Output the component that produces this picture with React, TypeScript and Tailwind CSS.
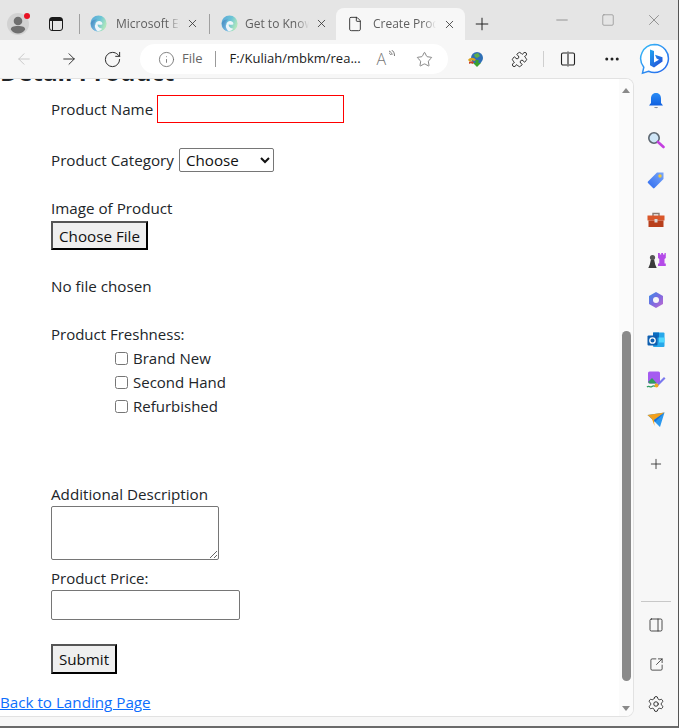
import { ArrowLeft, ArrowRight, Ellipsis, File, Info, Minus, PanelRight, Plus, Puzzle, RotateCw, Settings, Square, SquareArrowOutUpRight, Star, X } from "lucide-react";

const uiFont = "font-['Open_Sans','Noto_Sans',sans-serif]";

function EdgeLogo() {
  return (
    <svg width="17" height="17" viewBox="0 0 16 16" className="shrink-0">
      <defs>
        <linearGradient id="edgeA" x1="0" y1="0" x2="1" y2="0.4">
          <stop offset="0" stopColor="#5aa5d8" />
          <stop offset="0.6" stopColor="#6cc4d6" />
          <stop offset="1" stopColor="#aee6bc" />
        </linearGradient>
        <linearGradient id="edgeB" x1="0" y1="0" x2="1" y2="1">
          <stop offset="0" stopColor="#3f86bd" />
          <stop offset="1" stopColor="#8cc6ec" />
        </linearGradient>
      </defs>
      <circle cx="8" cy="8" r="7.6" fill="url(#edgeA)" />
      <path d="M5 9.2C5 6.6 7.2 5.4 9 5.6 11 5.800 12 7.400 11.600 8.600 10.600 9.600 8 9.200 7.400 8.600 6.800 10.400 8.600 12.600 11.600 12.600 10.400 14.600 8 15.600 5.600 15 3 13.600 4.200 10.400 5 9.200Z" fill="#eef5fa" />
      <path d="M1 7C2 4.600 5 3.600 7.200 4.400 5.400 5 3.600 7.400 4.600 11 4.900 12.600 6 14.200 7.400 15.400 3.400 15.200.6 11.600 1 7Z" fill="url(#edgeB)" />
    </svg>
  );
}

function TabFade({ text, width }: { text: string; width: string }) {
  return (
    <span
      className={`${width} overflow-hidden whitespace-nowrap text-[12px] leading-4 text-[#606060] [mask-image:linear-gradient(90deg,#000_80%,transparent)]`}
    >
      {text}
    </span>
  );
}

function Avatar() {
  return (
    <div className="relative mb-[5px] h-[22px] w-[22px] shrink-0">
      <svg width="22" height="22" viewBox="0 0 22 22">
        <circle cx="11" cy="11" r="11" fill="#d2d2d2" />
        <circle cx="11" cy="8" r="4.300" fill="#6f6f6f" />
        <path d="M3.800 16.500c0-2.500 2.500-3.500 7.200-3.500s7.200 1 7.200 3.500c-1.600 2.700-4.200 4-7.200 4s-5.600-1.300-7.200-4Z" fill="#6f6f6f" />
      </svg>
      <span className="absolute right-[-1px] top-0 h-[6px] w-[6px] rounded-full bg-[#e81123]" />
    </div>
  );
}

function TabBar() {
  return (
    <div className="flex h-[40px] items-end bg-[#e5e5e5] pl-[7px]">
      <Avatar />
      <div className="mb-[9px] ml-[20px] flex h-[14px] w-[14px] flex-col rounded-[3px] border-[1.5px] border-[#1a1a1a]">
        <div className="h-[3px] bg-[#1a1a1a]" />
        <div className="w-[3px] flex-1 border-r border-[#1a1a1a]" />
      </div>
      <div className="mb-[6px] ml-[16px] h-[20px] w-px bg-[#a0a0a0]" />
      <div className="mb-[8px] ml-[10px] flex w-[120px] items-center">
        <EdgeLogo />
        <span className="w-[9px]" />
        <TabFade text="Microsoft Edge" width="w-[64px]" />
        <X className="ml-[6px] h-[13px] w-[13px] text-[#333]" strokeWidth={1.5} />
      </div>
      <div className="mb-[6px] ml-[-1px] h-[20px] w-px bg-[#a0a0a0]" />
      <div className="mb-[8px] ml-[11px] flex w-[118px] items-center">
        <EdgeLogo />
        <span className="w-[7px]" />
        <TabFade text="Get to Know" width="w-[64px]" />
        <X className="ml-[6px] h-[13px] w-[13px] text-[#333]" strokeWidth={1.5} />
      </div>
      <div className="ml-[-3px] flex h-[32px] w-[129px] items-center rounded-t-[8px] bg-[#f7f7f7] pl-[11px]">
        <File className="h-[16px] w-[16px] text-[#222]" strokeWidth={1.3} />
        <span className="w-[10px]" />
        <TabFade text="Create Product" width="w-[63px]" />
        <X className="ml-[7px] h-[13px] w-[13px] text-[#333]" strokeWidth={1.5} />
      </div>
      <Plus className="mb-[6px] ml-[7px] h-[20px] w-[20px] text-[#222]" strokeWidth={1.2} />
      <div className="mb-[11px] ml-[61px] flex w-[110px] items-center justify-between">
        <Minus className="h-[18px] w-[18px] text-[#8a8a8a]" strokeWidth={1.2} />
        <Square className="h-[14px] w-[14px] text-[#8a8a8a]" strokeWidth={1.2} />
        <X className="h-[18px] w-[18px] text-[#8a8a8a]" strokeWidth={1.2} />
      </div>
    </div>
  );
}

function DownloadIcon() {
  return (
    <svg width="17" height="17" viewBox="0 0 17 17" className="shrink-0">
      <circle cx="10" cy="7" r="6" fill="#2f6fb5" />
      <path d="M7 3.400 11 2l2 3-3 2-2-1Z" fill="#5fae4a" />
      <path d="M1 9c2-3 6-3 8 0l-2 1c-1-1-3-1-4 1Z" fill="#d9a21c" />
      <path d="M2 11c2-1 4-1 5 .5l-1.500 1.500C4.500 12 3 12 2 13Z" fill="#c8402a" />
      <path d="M6 12h2.500V9h3v3H14l-4 4Z" fill="#3aa12e" />
    </svg>
  );
}

function BingLogo() {
  return (
    <svg width="31" height="32" viewBox="0 0 31 32" className="shrink-0">
      <defs>
        <linearGradient id="bingRing" x1="0" y1="0" x2="1" y2="1">
          <stop offset="0" stopColor="#38bdf8" />
          <stop offset="1" stopColor="#2563eb" />
        </linearGradient>
        <linearGradient id="bingB" x1="0" y1="0" x2="0.8" y2="1">
          <stop offset="0" stopColor="#22a7f0" />
          <stop offset="1" stopColor="#2450d8" />
        </linearGradient>
      </defs>
      <path d="M15.500 1.500a14 14 0 1 1-6 26.700L3.500 30.200l1.300-6A14 14 0 0 1 15.500 1.500Z" fill="#fff" stroke="url(#bingRing)" strokeWidth="1.500" />
      <path d="M11 6.500l4 1.500v11.500l5-2.800-2.400-1.200-1.600-3.800 7.500 2.600v4.200L15 24.500l-4-2.300Z" fill="url(#bingB)" />
    </svg>
  );
}

function ReadAloud() {
  return (
    <span className="relative flex h-[18px] w-[18px] items-center text-[16px] font-light leading-none text-[#777]">
      A
      <svg width="7" height="8" viewBox="0 0 7 8" className="absolute right-0 top-0" fill="none" stroke="#777" strokeWidth="1">
        <path d="M1 1c2 1 3 2 3 4M1 3c1 .5 1.500 1 1.500 2M3.500 0c2 1 3 3 3 6" />
      </svg>
    </span>
  );
}

function Toolbar() {
  return (
    <div className="flex h-[38px] items-center bg-[#f7f7f7] pl-[15px]">
      <ArrowLeft className="h-[18px] w-[18px] text-[#c4c4c4]" strokeWidth={1.2} />
      <ArrowRight className="ml-[27px] h-[18px] w-[18px] text-[#222]" strokeWidth={1.2} />
      <RotateCw className="ml-[25px] h-[19px] w-[19px] text-[#222]" strokeWidth={1.2} />
      <div className="ml-[18px] flex h-[30px] w-[308px] items-center rounded-full bg-white pl-[18px] text-[13px]">
        <Info className="h-[17px] w-[17px] text-[#6e6e6e]" strokeWidth={1.2} />
        <span className="ml-[7px] text-[#666]">File</span>
        <span className="ml-[12px] h-[16px] w-px bg-[#9a9a9a]" />
        <span className="ml-[14px] w-[134px] whitespace-nowrap text-[#1a1a1a]">F:/Kuliah/mbkm/rea...</span>
        <span className="ml-[13px]"><ReadAloud /></span>
        <Star className="ml-[21px] h-[17px] w-[17px] text-[#666]" strokeWidth={1.1} />
      </div>
      <span className="ml-[19px]"><DownloadIcon /></span>
      <Puzzle className="ml-[27px] h-[17px] w-[17px] text-[#222]" strokeWidth={1.3} />
      <span className="ml-[15px] h-[16px] w-px bg-[#cfcfcf]" />
      <svg width="16" height="16" viewBox="0 0 16 16" className="ml-[16px]" fill="none" stroke="#222" strokeWidth="1.100">
        <path d="M7 2H3a1.500 1.500 0 0 0-1.500 1.500v9A1.500 1.500 0 0 0 3 14h4M9 2h4a1.500 1.500 0 0 1 1.500 1.500v9A1.500 1.500 0 0 1 13 14H9M8 0.500v15" />
      </svg>
      <Ellipsis className="ml-[27px] h-[18px] w-[18px] text-[#222]" strokeWidth={2} />
      <span className="ml-[18px]"><BingLogo /></span>
    </div>
  );
}

const buttonClass = "border-2 border-t-[#555] border-l-[#555] border-r-black border-b-black bg-[#efefef] text-[#111]";
const fieldBorder = "rounded-[2px] border border-[#767676] bg-white";

function PageContent() {
  return (
    <div className={`min-w-0 flex-1 overflow-hidden text-[15.2px] leading-[24px] text-[#212529] ${uiFont}`}>
      <h2 className="mt-[-21px] h-[28px] text-[24.3px] font-bold leading-[28px] text-[#212529]">Detail Product</h2>
      <form className="pl-[51px]">
        <div className="mt-[9px] flex h-[28px] items-center gap-[4px]">
          <label>Product Name</label>
          <input type="text" className="h-[28px] w-[187px] border border-[#f00] bg-white" />
        </div>
        <div className="mt-[25px] flex h-[24px] items-center gap-[5px]">
          <label>Product Category</label>
          <select className={`h-[24px] w-[95px] pl-[2px] text-[#111] ${fieldBorder}`}>
            <option>Choose</option>
          </select>
        </div>
        <p className="mt-[24px]">Image of Product</p>
        <button type="button" className={`mt-px block h-[29px] w-[97px] ${buttonClass}`}>Choose File</button>
        <p className="mt-[24px]">No file chosen</p>
        <p className="mt-[24px] text-[15px]">Product Freshness:</p>
        <div className="pl-[64px] text-[15px]">
          {["Brand New", "Second Hand", "Refurbished"].map((item) => (
            <label key={item} className="flex h-[24px] items-center gap-[5px]">
              <input type="checkbox" className="h-[13px] w-[13px]" />
              {item}
            </label>
          ))}
        </div>
        <p className="mt-[64px]">Additional Description</p>
        <textarea className={`block h-[54px] w-[168px] ${fieldBorder}`} />
        <p className="mt-[6px] text-[15px]">Product Price:</p>
        <input type="text" className={`block h-[30px] w-[189px] ${fieldBorder}`} />
        <button type="submit" className={`mt-[24px] block h-[30px] w-[66px] ${buttonClass}`}>Submit</button>
      </form>
      <a href="#" className="mt-[16px] block text-[#0d6efd] underline">Back to Landing Page</a>
    </div>
  );
}

function Scrollbar() {
  return (
    <div className="flex w-[14px] shrink-0 flex-col items-center bg-[#fbfbfb] pt-[9px]">
      <span className="h-0 w-0 border-x-[4px] border-b-[5px] border-x-transparent border-b-[#8a8a8a]" />
      <div className="mt-[238px] h-[350px] w-[9px] rounded-full bg-[#8a8a8a]" />
      <span className="mt-[25px] h-0 w-0 border-x-[4px] border-t-[5px] border-x-transparent border-t-[#8a8a8a]" />
    </div>
  );
}

function SideIcon({ children }: { children: React.ReactNode }) {
  return <div className="flex h-[40px] items-center justify-center">{children}</div>;
}

function Sidebar() {
  return (
    <div className="flex flex-1 flex-col items-stretch pt-[2px]">
      <SideIcon>
        <svg width="18" height="18" viewBox="0 -1 18 18">
          <defs>
            <linearGradient id="bell" x1="0" y1="0" x2="0" y2="1">
              <stop offset="0" stopColor="#2a8cf5" />
              <stop offset="1" stopColor="#1160e0" />
            </linearGradient>
          </defs>
          <path d="M9 1c3.500 0 5 2.500 5 5.500V11l2 2.500H2L4 11V6.500C4 3.500 5.500 1 9 1Z" fill="url(#bell)" />
          <path d="M7 15h4c0 1.500-3.500 1.500-4 0Z" fill="#8a8f98" />
        </svg>
      </SideIcon>
      <SideIcon>
        <svg width="18" height="18" viewBox="0 0 18 18">
          <circle cx="7" cy="7" r="5.200" fill="#cfe6f7" stroke="#5c6670" strokeWidth="1.600" />
          <path d="M11 11l5.500 5" stroke="#c43fe0" strokeWidth="2.600" strokeLinecap="round" />
        </svg>
      </SideIcon>
      <SideIcon>
        <svg width="18" height="18" viewBox="0 0 18 18">
          <defs>
            <linearGradient id="tag" x1="0" y1="1" x2="1" y2="0">
              <stop offset="0" stopColor="#2f6cf0" />
              <stop offset="1" stopColor="#7aa7f8" />
            </linearGradient>
          </defs>
          <path d="M1 10.500 10 1.500h6.500V8l-9 9c-.5.500-1 .5-1.500 0L1 12c-.5-.5-.5-1 0-1.500Z" fill="url(#tag)" />
          <circle cx="13" cy="5" r="1.700" fill="#f5c938" />
        </svg>
      </SideIcon>
      <SideIcon>
        <svg width="18" height="18" viewBox="0 0 18 18">
          <path d="M6 5V2.500h6V5" fill="none" stroke="#8a7a70" strokeWidth="1.400" />
          <rect x="0.500" y="4.500" width="17" height="5" fill="#d9572a" />
          <rect x="1.500" y="9.500" width="15" height="6.500" fill="#b83f1c" />
          <rect x="7.500" y="8" width="3" height="3.500" fill="#d8d8d8" />
        </svg>
      </SideIcon>
      <SideIcon>
        <svg width="19" height="18" viewBox="0 0 19 18">
          <path d="M11 2h1.800v1.500h1.400V2H16v1.500h1.500V2h1.300v5l-1.300 1v4.500h1.300V15H11v-2.500h1.300V8L11 7Z" fill="#b44be8" />
          <circle cx="5.500" cy="6.500" r="2.600" fill="#555" />
          <path d="M3.800 9h3.400l1 4.500 1.500 3.500H1.300l1.500-3.500Z" fill="#3a3a3a" />
        </svg>
      </SideIcon>
      <SideIcon>
        <svg width="18" height="18" viewBox="0 0 18 18">
          <defs>
            <linearGradient id="m365" x1="0" y1="0" x2="1" y2="1">
              <stop offset="0" stopColor="#3a8ee8" />
              <stop offset="0.500" stopColor="#7b6ae0" />
              <stop offset="1" stopColor="#c56ad0" />
            </linearGradient>
          </defs>
          <path d="M9 1l7 4v8l-7 4-7-4V5Z" fill="url(#m365)" />
          <circle cx="9" cy="9" r="3" fill="#f7f7f7" />
        </svg>
      </SideIcon>
      <SideIcon>
        <svg width="18" height="18" viewBox="0 0 18 18">
          <rect x="6" y="1.500" width="11.500" height="14.500" rx="1" fill="#28a8ea" />
          <rect x="6" y="1.500" width="6" height="5" fill="#0a6cc0" />
          <rect x="12" y="6.500" width="5.500" height="5" fill="#50d9ff" />
          <rect x="0.500" y="4.500" width="10" height="10" rx="1" fill="#0f5fb0" />
          <circle cx="5.500" cy="9.500" r="2.700" fill="none" stroke="#fff" strokeWidth="1.300" />
        </svg>
      </SideIcon>
      <SideIcon>
        <svg width="20" height="18" viewBox="0 0 20 18">
          <rect x="2" y="0.500" width="12" height="12" rx="1.500" fill="#a55cf0" />
          <path d="M2 11l4-4 5 5.500H3.500Z" fill="#2f9e5f" />
          <path d="M1 16c2-2 3 1 5-.5s3 .5 5-.5" fill="none" stroke="#2f9e5f" strokeWidth="1.300" />
          <path d="M10 14l8-8 1.500 1.500-8 8Z" fill="#7a78ee" />
          <circle cx="10.500" cy="14.500" r="2" fill="#f0a820" />
        </svg>
      </SideIcon>
      <SideIcon>
        <svg width="18" height="16" viewBox="0 0 18 16">
          <path d="M0.500 3 17.500 0.500 13 15 8 10Z" fill="#2b98ee" />
          <path d="M0.500 3 17.500 0.500 7 8 7.500 14 5 7Z" fill="#f2a01e" />
          <path d="M7 8 17.500 0.500 8 10Z" fill="#1b6fd0" />
        </svg>
      </SideIcon>
      <div className="mt-[4px] flex h-[40px] items-center justify-center">
        <Plus className="h-[16px] w-[16px] text-[#222]" strokeWidth={1.2} />
      </div>
      <div className="mx-[7px] mb-px mt-auto h-px bg-[#c8c8c8]" />
      <div className="flex h-[43px] items-center justify-center">
        <PanelRight className="h-[16px] w-[16px] text-[#222]" strokeWidth={1.2} />
      </div>
      <div className="flex h-[36px] items-center justify-center">
        <SquareArrowOutUpRight className="h-[15px] w-[15px] text-[#222]" strokeWidth={1.2} />
      </div>
      <div className="flex h-[44px] items-center justify-center">
        <Settings className="h-[18px] w-[18px] text-[#222]" strokeWidth={1.2} />
      </div>
    </div>
  );
}

export default function App() {
  return (
    <div className={`flex h-[728px] w-[679px] flex-col overflow-hidden border-b-2 border-r border-b-[#6a6a6a] border-r-[#555] bg-[#f7f7f7] ${uiFont}`}>
      <TabBar />
      <Toolbar />
      <div className="flex min-h-0 flex-1">
        <div className="mb-[9px] flex w-[634px] shrink-0 overflow-hidden rounded-r-[8px] border-b border-r border-t border-[#e2e2e2] bg-white">
          <PageContent />
          <Scrollbar />
        </div>
        <Sidebar />
      </div>
    </div>
  );
}
